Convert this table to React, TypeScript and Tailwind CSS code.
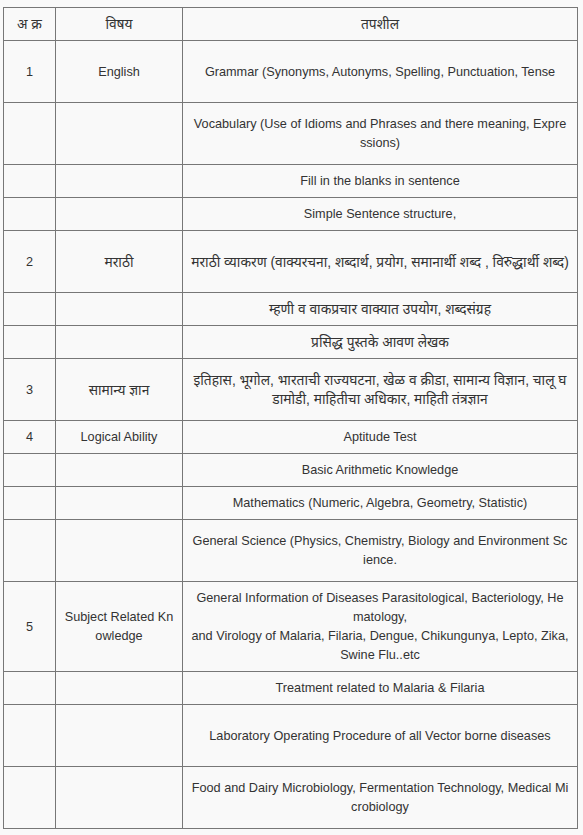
import React from "react";

type Row = { h: string; a: string; b: string[]; c: string[] };

const rows: Row[] = [
  { h: "h-[33px]", a: "अ क्र", b: ["विषय"], c: ["तपशील"] },
  { h: "h-[62px]", a: "1", b: ["English"], c: ["Grammar (Synonyms, Autonyms, Spelling, Punctuation, Tense"] },
  { h: "h-[62px]", a: "", b: [], c: ["Vocabulary (Use of Idioms and Phrases and there meaning, Expre", "ssions)"] },
  { h: "h-[33px]", a: "", b: [], c: ["Fill in the blanks in sentence"] },
  { h: "h-[33px]", a: "", b: [], c: ["Simple Sentence structure,"] },
  { h: "h-[62px]", a: "2", b: ["मराठी"], c: ["मराठी व्याकरण (वाक्यरचना, शब्दार्थ, प्रयोग, समानार्थी शब्द , विरुद्धार्थी शब्द)"] },
  { h: "h-[33px]", a: "", b: [], c: ["म्हणी व वाकप्रचार वाक्यात उपयोग, शब्दसंग्रह"] },
  { h: "h-[33px]", a: "", b: [], c: ["प्रसिद्ध पुस्तके आवण लेखक"] },
  { h: "h-[62px]", a: "3", b: ["सामान्य ज्ञान"], c: ["इतिहास, भूगोल, भारताची राज्यघटना, खेळ व क्रीडा, सामान्य विज्ञान, चालू घ", "डामोडी, माहितीचा अधिकार, माहिती तंत्रज्ञान"] },
  { h: "h-[33px]", a: "4", b: ["Logical Ability"], c: ["Aptitude Test"] },
  { h: "h-[33px]", a: "", b: [], c: ["Basic Arithmetic Knowledge"] },
  { h: "h-[33px]", a: "", b: [], c: ["Mathematics (Numeric, Algebra, Geometry, Statistic)"] },
  { h: "h-[62px]", a: "", b: [], c: ["General Science (Physics, Chemistry, Biology and Environment Sc", "ience."] },
  {
    h: "h-[90px]",
    a: "5",
    b: ["Subject Related Kn", "owledge"],
    c: [
      "General Information of Diseases Parasitological, Bacteriology, He",
      "matology,",
      "and Virology of Malaria, Filaria, Dengue, Chikungunya, Lepto, Zika,",
      "Swine Flu..etc",
    ],
  },
  { h: "h-[33px]", a: "", b: [], c: ["Treatment related to Malaria & Filaria"] },
  { h: "h-[62px]", a: "", b: [], c: ["Laboratory Operating Procedure of all Vector borne diseases"] },
  { h: "h-[62px]", a: "", b: [], c: ["Food and Dairy Microbiology, Fermentation Technology, Medical Mi", "crobiology"] },
];

const isDeva = (s: string) => /[\u0900-\u097F]/.test(s);

function Lines({ lines }: { lines: string[] }) {
  return (
    <div className="flex flex-col items-center pt-[1px]">
      {lines.map((l, i) => (
        <span key={i} className={isDeva(l) ? "whitespace-nowrap text-[13.8px]" : "whitespace-nowrap"}>
          {l}
        </span>
      ))}
    </div>
  );
}

export default function App() {
  return (
    <div
      className="min-h-[835px] w-[583px] bg-[#f9f9f9] pl-[3px] pt-[7px] text-[12.7px] leading-[19px] text-[#333]"
      style={{ fontFamily: '"Liberation Sans", Arial, "Noto Sans", sans-serif' }}
    >
      <div className="w-[575px] border-l border-t border-[#777]">
        {rows.map((r, i) => (
          <div key={i} className={`flex ${r.h}`}>
            <div className="flex w-[52px] shrink-0 items-center justify-center border-b border-r border-[#777]">
              <Lines lines={r.a ? [r.a] : []} />
            </div>
            <div className="flex w-[127px] shrink-0 items-center justify-center border-b border-r border-[#777]">
              <Lines lines={r.b} />
            </div>
            <div className="flex w-[395px] shrink-0 items-center justify-center border-b border-r border-[#777]">
              <Lines lines={r.c} />
            </div>
          </div>
        ))}
      </div>
    </div>
  );
}
